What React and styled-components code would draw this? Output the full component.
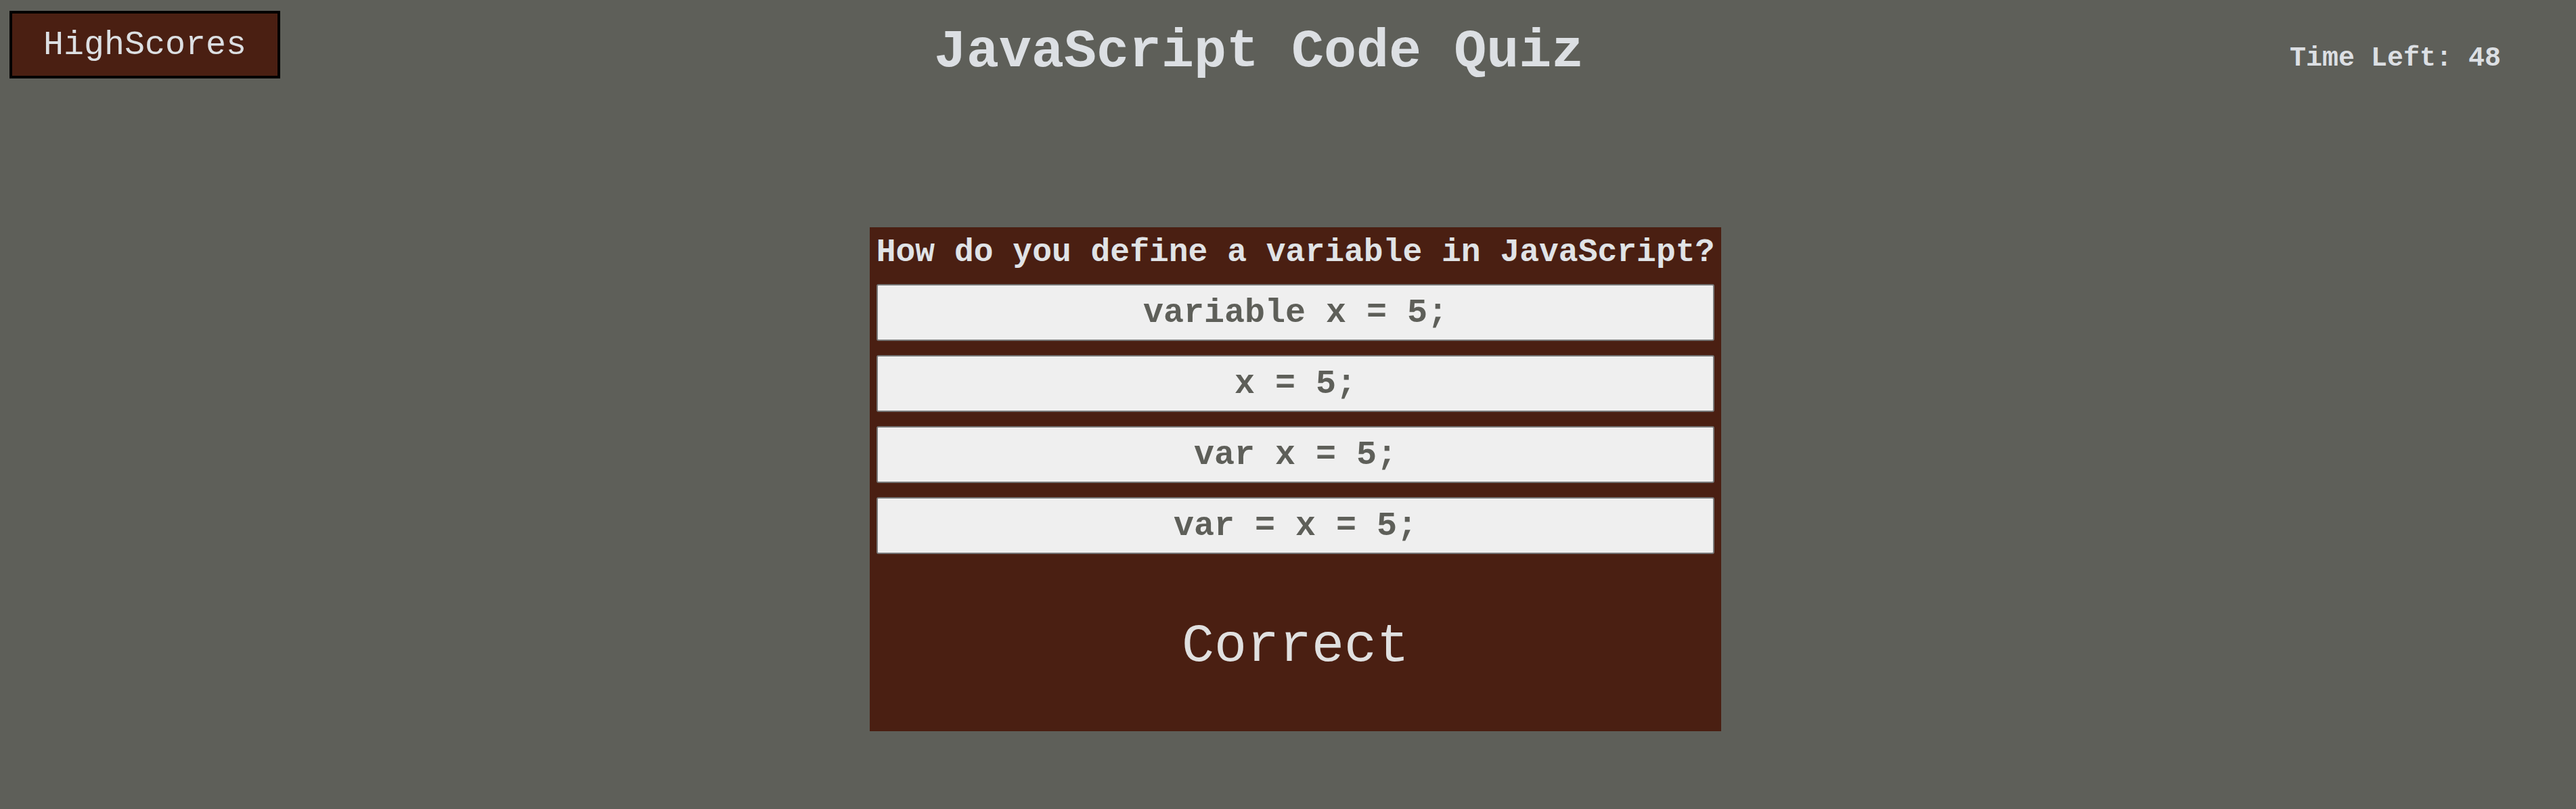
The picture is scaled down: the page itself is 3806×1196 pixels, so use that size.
import React from "react";
import styled, { createGlobalStyle } from "styled-components";

const MONO = `"Courier New", "Nimbus Mono PS", "Nimbus Mono L", FreeMono, "Courier 10 Pitch", Courier, "Liberation Mono", monospace`;

const Global = createGlobalStyle`
  html, body {
    margin: 0;
    padding: 0;
    background: #5e5f59;
    font-family: ${MONO};
  }
  #root { min-height: 1196px; }
`;

const Page = styled.div`
  width: 3806px;
  min-height: 1196px;
  background: #5e5f59;
`;

const Header = styled.header`
  display: flex;
  align-items: flex-start;
  height: 140px;
`;

const HighScoresButton = styled.button`
  margin: 16px 0 0 14px;
  width: 400px;
  height: 100px;
  border: 4px solid #000;
  background: #4a1f12;
  color: #dcdfe2;
  font-family: ${MONO};
  font-size: 50px;
  font-weight: 400;
  padding: 0;
  cursor: pointer;
`;

const Title = styled.h1`
  margin: 31px 0 0 966px;
  font-size: 80px;
  font-weight: 700;
  line-height: normal;
  color: #dcdfe3;
  white-space: nowrap;
`;

const Timer = styled.div`
  margin: 64px 111px 0 auto;
  font-size: 40px;
  font-weight: 700;
  line-height: normal;
  color: #dcdfe3;
  white-space: nowrap;
`;

const Main = styled.main`
  display: flex;
  justify-content: center;
  padding: 196px 0 0 22px;
`;

const Card = styled.section`
  display: flex;
  flex-direction: column;
  padding: 10px;
  background: #4a1f12;
`;

const Question = styled.h2`
  margin: 0 0 20px;
  font-size: 48px;
  font-weight: 700;
  line-height: normal;
  color: #e0e3e6;
  white-space: nowrap;
`;

const Options = styled.div`
  display: flex;
  flex-direction: column;
  gap: 21px;
`;

const OptionButton = styled.button`
  height: 84px;
  border: 2px solid #767676;
  border-radius: 3px;
  background: #efefef;
  color: #5e5f59;
  font-family: ${MONO};
  font-size: 50px;
  font-weight: 700;
  padding: 0;
  cursor: pointer;
`;

const Feedback = styled.p`
  margin: 91px 0 70px;
  text-align: center;
  font-size: 80px;
  font-weight: 400;
  line-height: normal;
  color: #e0e0e0;
`;

const options = ["variable x = 5;", "x = 5;", "var x = 5;", "var = x = 5;"];

export default function App() {
  return (
    <Page>
      <Global />
      <Header>
        <HighScoresButton>HighScores</HighScoresButton>
        <Title>JavaScript Code Quiz</Title>
        <Timer>Time Left: 48</Timer>
      </Header>
      <Main>
        <Card>
          <Question>How do you define a variable in JavaScript?</Question>
          <Options>
            {options.map((o) => (
              <OptionButton key={o}>{o}</OptionButton>
            ))}
          </Options>
          <Feedback>Correct</Feedback>
        </Card>
      </Main>
    </Page>
  );
}
